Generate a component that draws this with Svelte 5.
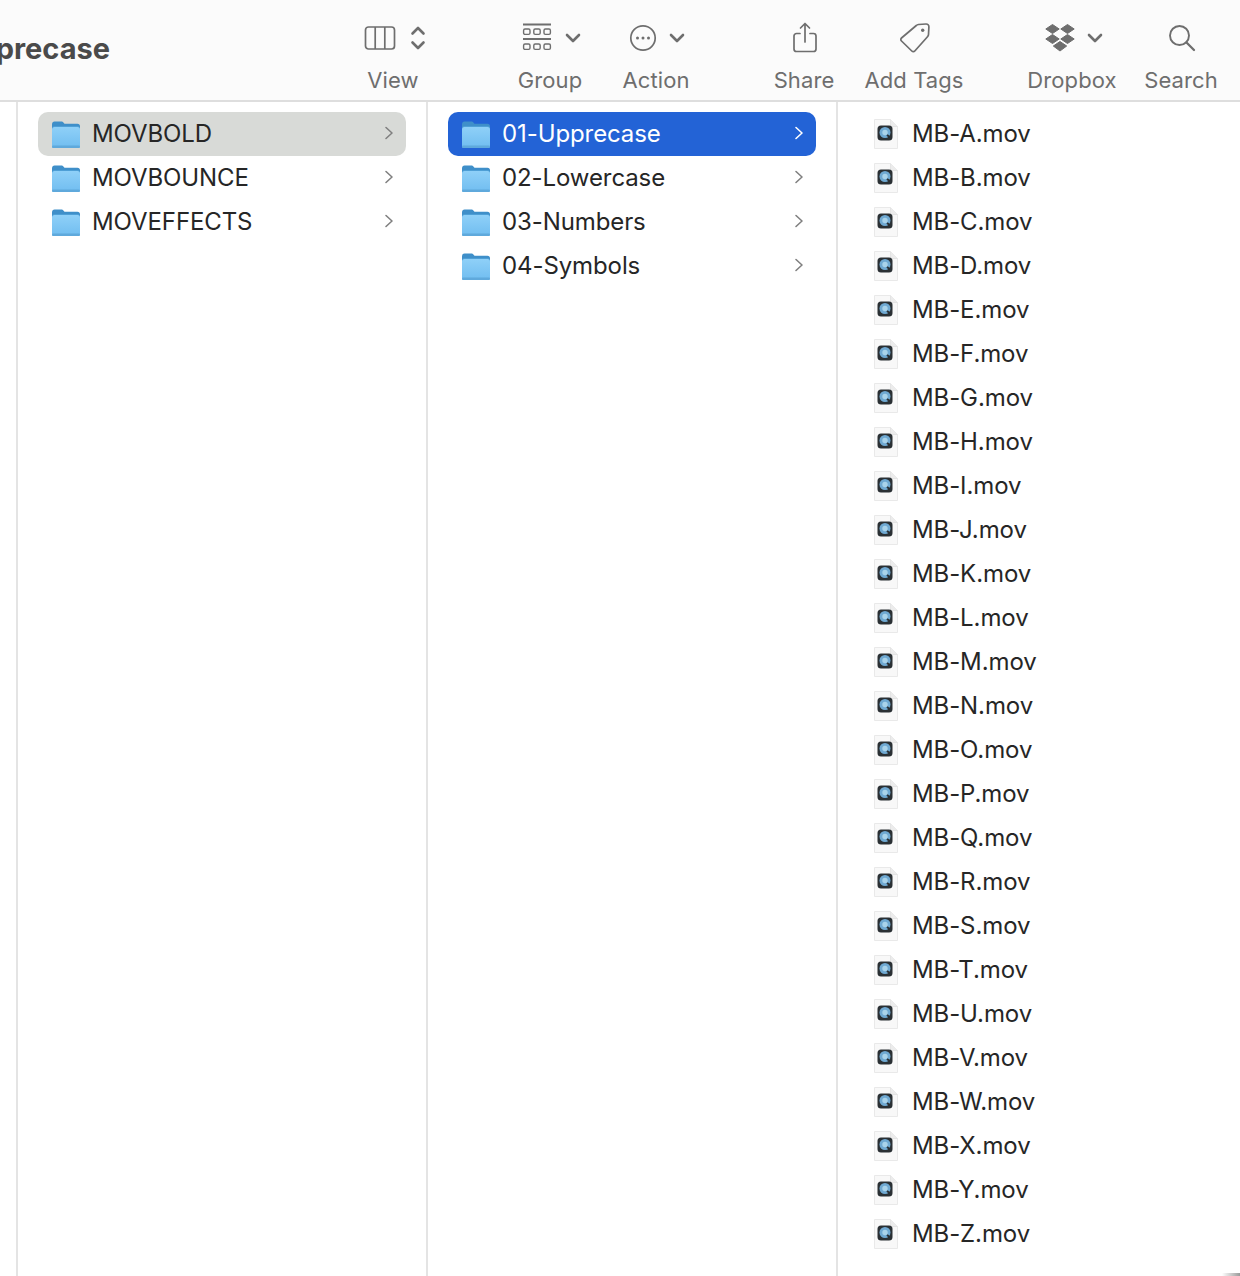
<script lang="ts">
  const folders1 = ['MOVBOLD', 'MOVBOUNCE', 'MOVEFFECTS'];
  const folders2 = ['01-Upprecase', '02-Lowercase', '03-Numbers', '04-Symbols'];
  const files = 'ABCDEFGHIJKLMNOPQRSTUVWXYZ'.split('').map((c) => `MB-${c}.mov`);
</script>

{#snippet folder()}
  <svg class="folder" width="32" height="30" viewBox="0 0 32 30">
    <path d="M2 5.500C2 3.500 3 2.500 4.500 2.500h6.500c1.300 0 2 .5 2.800 1.400l.7.8h13c1.600 0 2.500 1 2.500 2.600V14H2z" fill="#3f8fc9" />
    <rect x="2" y="7" width="28" height="22" rx="2.500" fill="#4e9fd6" />
    <rect x="2" y="8" width="28" height="21" rx="2.500" fill="url(#folderFill)" />
    <rect x="2" y="26.500" width="28" height="2.500" rx="1.200" fill="#5fa9dc" />
  </svg>
{/snippet}

{#snippet chevron()}
  <svg class="chev" width="10" height="14" viewBox="0 0 10 14">
    <path d="M2 1.500 8 7l-6 5.500" fill="none" stroke="currentColor" stroke-width="1.600" stroke-linecap="round" stroke-linejoin="round" />
  </svg>
{/snippet}

{#snippet down(x: number)}
  <svg class="down" width="16" height="10" viewBox="0 0 16 10" style="margin-left:{x}px">
    <path d="M2 2l6 6 6-6" fill="none" stroke="#6e6e6e" stroke-width="2.600" stroke-linecap="round" stroke-linejoin="round" />
  </svg>
{/snippet}

{#snippet movIcon()}
  <svg class="mov" width="28" height="32" viewBox="0 0 28 32">
    <path d="M2.500 1.500h16l7 7v22h-23z" fill="#f8f8f8" stroke="#e9e9e9" stroke-width="1" />
    <path d="M18.500 1.500v7h7" fill="#ececec" stroke="#e4e4e4" stroke-width="1" />
    <rect x="5.500" y="7.500" width="15" height="15" rx="3.500" fill="#2a3034" />
    <circle cx="13" cy="14.500" r="5.500" fill="#6fa9d2" />
    <circle cx="13" cy="14.500" r="2.700" fill="#a9d3ea" />
    <path d="M15 17l4 3" stroke="#2a3034" stroke-width="2" />
  </svg>
{/snippet}

<svg class="defs" width="0" height="0" aria-hidden="true">
  <defs>
    <linearGradient id="folderFill" x1="0" y1="0" x2="0" y2="1">
      <stop offset="0" stop-color="#8fd0f8" />
      <stop offset="1" stop-color="#70bdf0" />
    </linearGradient>
  </defs>
</svg>

<div class="window">
  <header class="toolbar">
    <div class="title"><span>01-Upprecase</span></div>

    <div class="tool view">
      <div class="glyph">
        <svg width="32" height="26" viewBox="0 0 32 26" fill="none" stroke="#6e6e6e" stroke-width="1.700">
          <rect x="1.500" y="2" width="29" height="22" rx="3" />
          <path d="M11.200 2v22M20.800 2v22" />
        </svg>
        <svg class="updown" width="16" height="26" viewBox="0 0 16 26" fill="none" stroke="#6e6e6e" stroke-width="2.600" stroke-linecap="round" stroke-linejoin="round">
          <path d="M2.500 8.500 8 3l5.500 5.500M2.500 17.500 8 23l5.500-5.500" />
        </svg>
      </div>
      <span>View</span>
    </div>

    <div class="tool group">
      <div class="glyph">
        <svg width="30" height="30" viewBox="0 0 30 30" fill="none" stroke="#6e6e6e">
          <path d="M1 1.500h28M1 16h28" stroke-width="1.800" />
          <g stroke-width="1.400">
            <rect x="1.600" y="6" width="6.400" height="5.400" rx="1.400" />
            <rect x="11.800" y="6" width="6.400" height="5.400" rx="1.400" />
            <rect x="22" y="6" width="6.400" height="5.400" rx="1.400" />
            <rect x="1.600" y="21" width="6.400" height="5.400" rx="1.400" />
            <rect x="11.800" y="21" width="6.400" height="5.400" rx="1.400" />
            <rect x="22" y="21" width="6.400" height="5.400" rx="1.400" />
          </g>
        </svg>
        {@render down(13)}
      </div>
      <span>Group</span>
    </div>

    <div class="tool action">
      <div class="glyph">
        <svg width="28" height="28" viewBox="0 0 28 28">
          <circle cx="14" cy="14" r="12.200" fill="none" stroke="#6e6e6e" stroke-width="1.700" />
          <circle cx="8.500" cy="14" r="1.500" fill="#6e6e6e" />
          <circle cx="14" cy="14" r="1.500" fill="#6e6e6e" />
          <circle cx="19.500" cy="14" r="1.500" fill="#6e6e6e" />
        </svg>
        {@render down(12)}
      </div>
      <span>Action</span>
    </div>

    <div class="tool share">
      <div class="glyph">
        <svg width="26" height="32" viewBox="0 0 26 32" fill="none" stroke="#6e6e6e" stroke-width="1.700" stroke-linecap="round" stroke-linejoin="round">
          <path d="M8 11.500H4.500a2.500 2.500 0 0 0-2.500 2.500v13a2.500 2.500 0 0 0 2.500 2.500h17a2.500 2.500 0 0 0 2.500-2.500V14a2.500 2.500 0 0 0-2.500-2.500H18" />
          <path d="M13 20V1.500M8.500 6 13 1.500 17.500 6" />
        </svg>
      </div>
      <span>Share</span>
    </div>

    <div class="tool tags">
      <div class="glyph">
        <svg width="32" height="32" viewBox="0 0 32 32" fill="none" stroke="#6e6e6e" stroke-width="1.700" stroke-linejoin="round">
          <path d="M19.500 2.500 27 2c1.800-.1 3 1.100 2.900 2.900l-.4 7.600c0 .9-.4 1.600-1 2.200L15.800 29c-.8.900-2.100.9-3 0L2.500 19c-.9-.9-.9-2.200 0-3L17.300 3.500c.6-.6 1.300-.9 2.200-1z" />
          <circle cx="23.700" cy="8.300" r="1.700" fill="#6e6e6e" stroke="none" />
        </svg>
      </div>
      <span>Add Tags</span>
    </div>

    <div class="tool dropbox">
      <div class="glyph">
        <svg width="32" height="30" viewBox="0 0 32 30" fill="#6e6e6e" stroke="#6e6e6e" stroke-width="1" stroke-linejoin="round">
          <path d="M8.500 1.500 15.200 6 8.500 10.500 1.800 6zM23.500 1.500 30.200 6l-6.700 4.500L16.800 6zM8.500 11.500 15.200 16l-6.700 4.500L1.800 16zM23.500 11.500 30.200 16l-6.700 4.500L16.800 16zM16 18.500l6.700 4.500-6.700 5-6.700-5z" />
        </svg>
        {@render down(11)}
      </div>
      <span>Dropbox</span>
    </div>

    <div class="tool search">
      <div class="glyph">
        <svg width="28" height="28" viewBox="0 0 28 28" fill="none" stroke="#6e6e6e" stroke-width="1.900" stroke-linecap="round">
          <circle cx="11.500" cy="11.500" r="9.500" />
          <path d="M18.500 18.500 26 26" stroke-width="2.300" />
        </svg>
      </div>
      <span>Search</span>
    </div>
  </header>

  <main class="browser">
    <section class="col stub"></section>

    <section class="col">
      {#each folders1 as name, i}
        <div class="row" class:inactive={i === 0}>
          {@render folder()}
          <span class="name">{name}</span>
          {@render chevron()}
        </div>
      {/each}
    </section>

    <section class="col">
      {#each folders2 as name, i}
        <div class="row" class:selected={i === 0}>
          {@render folder()}
          <span class="name">{name}</span>
          {@render chevron()}
        </div>
      {/each}
    </section>

    <section class="col files">
      {#each files as name}
        <div class="row">
          {@render movIcon()}
          <span class="name">{name}</span>
        </div>
      {/each}
    </section>
  </main>
  <div class="corner"></div>
</div>

<style>
  :global(body) {
    margin: 0;
    background: #fff;
    overflow: hidden;
  }

  .defs {
    position: absolute;
  }

  .window {
    position: relative;
    width: 1240px;
    height: 1276px;
    display: flex;
    flex-direction: column;
    overflow: hidden;
    font-family: Inter, "Noto Sans", sans-serif;
    color: #262626;
  }

  .toolbar {
    flex: none;
    height: 100px;
    box-sizing: border-box;
    display: flex;
    background: #fbfbfb;
  }

  .title {
    width: 110px;
    flex: none;
    display: flex;
    justify-content: flex-end;
    overflow: hidden;
    padding-top: 30px;
    font-size: 29px;
    line-height: 38px;
    font-weight: 700;
    letter-spacing: 0;
    white-space: nowrap;
    color: #4a4a4a;
  }

  .tool {
    flex: none;
    display: flex;
    flex-direction: column;
    align-items: center;
    font-size: 22px;
    letter-spacing: 0.1px;
    color: #6e6e6e;
  }

  .tool span {
    margin-top: 3px;
    line-height: 30px;
    white-space: nowrap;
  }

  .glyph {
    height: 62px;
    box-sizing: border-box;
    padding: 14px 0 0 2px;
    display: flex;
    align-items: center;
  }

  .view .glyph {
    padding-left: 3px;
  }

  .updown {
    margin-left: 14px;
  }

  .view { width: 66px; margin-left: 250px; }
  .group { width: 70px; margin-left: 89px; }
  .action { width: 70px; margin-left: 36px; }
  .share { width: 64px; margin-left: 81px; }
  .tags { width: 100px; margin-left: 28px; }
  .dropbox { width: 92px; margin-left: 62px; }
  .search { width: 74px; margin-left: 26px; }

  .browser {
    flex: 1;
    min-height: 0;
    display: grid;
    grid-template-columns: 18px 410px 410px 1fr;
    border-top: 2px solid #dedede;
  }

  .col {
    box-sizing: border-box;
    padding: 10px 20px 0;
    border-right: 2px solid #e4e4e4;
  }

  .stub {
    padding: 0;
  }

  .files {
    border-right: 0;
    padding-left: 34px;
  }

  .row {
    height: 44px;
    box-sizing: border-box;
    display: flex;
    align-items: center;
    padding: 0 12px;
    border-radius: 10px;
    font-size: 24px;
    letter-spacing: -0.1px;
  }

  .folder {
    flex: none;
    margin-right: 10px;
  }

  .name {
    flex: 1;
    white-space: nowrap;
    margin-top: -2px;
  }

  .chev {
    flex: none;
    color: #808080;
    margin: -2px 0 0;
  }

  .inactive {
    background: #d8dad7;
  }

  .selected {
    background: #2363d6;
    color: #fff;
  }

  .selected .chev {
    color: #fff;
  }

  .mov {
    flex: none;
    margin-right: 12px;
  }

  .files .row {
    padding: 0;
  }

  .corner {
    position: absolute;
    right: 0;
    bottom: 0;
    width: 18px;
    height: 3px;
    background: linear-gradient(to right, #ffffff, #9a9a9a);
  }
</style>
